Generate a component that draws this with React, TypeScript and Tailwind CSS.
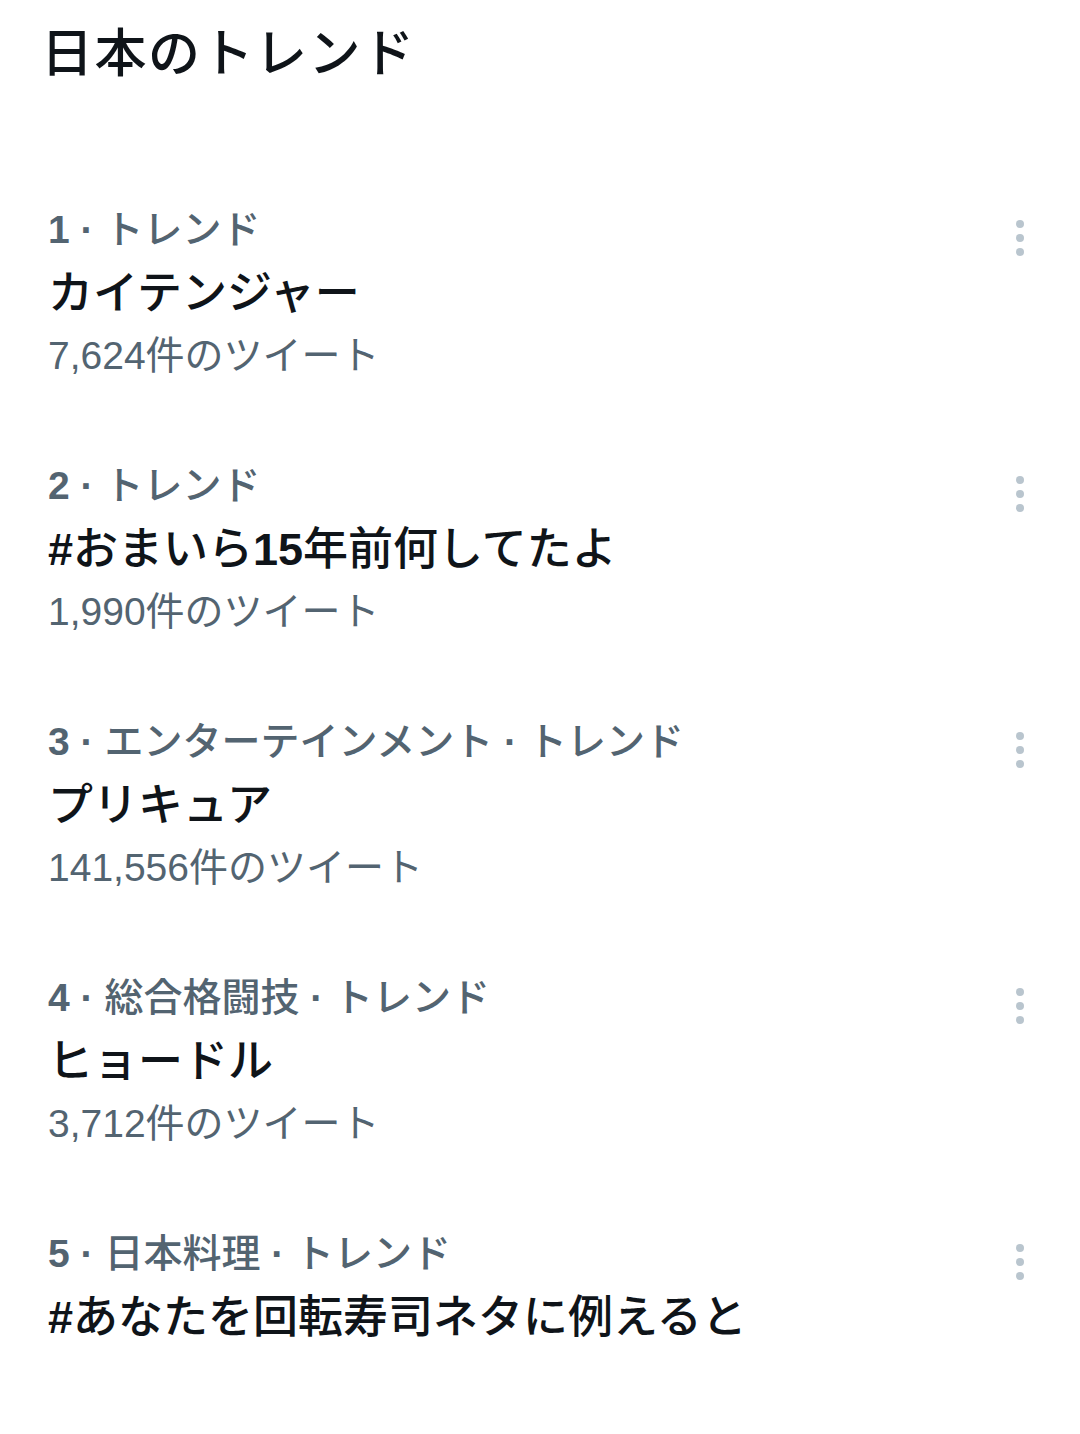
import React from 'react'

interface Trend {
  rank: number
  category: string[]
  name: string
  count?: string
}

const trends: Trend[] = [
  { rank: 1, category: ['トレンド'], name: 'カイテンジャー', count: '7,624件のツイート' },
  { rank: 2, category: ['トレンド'], name: '#おまいら15年前何してたよ', count: '1,990件のツイート' },
  { rank: 3, category: ['エンターテインメント', 'トレンド'], name: 'プリキュア', count: '141,556件のツイート' },
  { rank: 4, category: ['総合格闘技', 'トレンド'], name: 'ヒョードル', count: '3,712件のツイート' },
  { rank: 5, category: ['日本料理', 'トレンド'], name: '#あなたを回転寿司ネタに例えると' },
]

// latin chars / digits come out bold, kana & kanji stay medium
const renderName = (name: string) =>
  name.split(/([#0-9A-Za-z]+)/).map((part, i) =>
    /^[#0-9A-Za-z]+$/.test(part) ? (
      <span key={i} className="font-bold">{part}</span>
    ) : (
      <span key={i}>{part}</span>
    )
  )

const Dot = () => <span className="font-bold"> · </span>

const MoreIcon = () => (
  <svg width="10" height="38" viewBox="0 0 10 38" className="shrink-0 mt-[17px]">
    <circle cx="5" cy="5" r="4" fill="#b9c5ce" />
    <circle cx="5" cy="19" r="4" fill="#b9c5ce" />
    <circle cx="5" cy="33" r="4" fill="#b9c5ce" />
  </svg>
)

const App: React.FC = () => {
  return (
    <div
      className="w-[1080px] min-h-[1434px] bg-white text-[#0f1419]"
      style={{ fontFamily: '"Liberation Sans", "Noto Sans CJK JP", sans-serif' }}
    >
      {/* Header */}
      <div className="pl-[41px] pt-[22px] pb-[78px]">
        <h1 className="text-[52px] leading-[64px] font-medium tracking-[1.5px]">日本のトレンド</h1>
      </div>

      {/* Trend list */}
      <div>
        {trends.map((t) => (
          <div key={t.rank} className="flex items-start justify-between pl-[48px] pr-[55px] pt-[38px] h-[256px]">
            <div className="flex flex-col">
              <div className="text-[39px] leading-[56px] text-[#536471] font-medium whitespace-pre">
                <span className="font-bold">{t.rank}</span>
                {t.category.map((c, i) => (
                  <React.Fragment key={i}>
                    <Dot />
                    {c}
                  </React.Fragment>
                ))}
              </div>
              <div className="text-[45px] leading-[72px] font-medium">{renderName(t.name)}</div>
              {t.count && (
                <div className="text-[39px] leading-[52px] text-[#536471]">{t.count}</div>
              )}
            </div>
            <MoreIcon />
          </div>
        ))}
      </div>
    </div>
  )
}

export default App
